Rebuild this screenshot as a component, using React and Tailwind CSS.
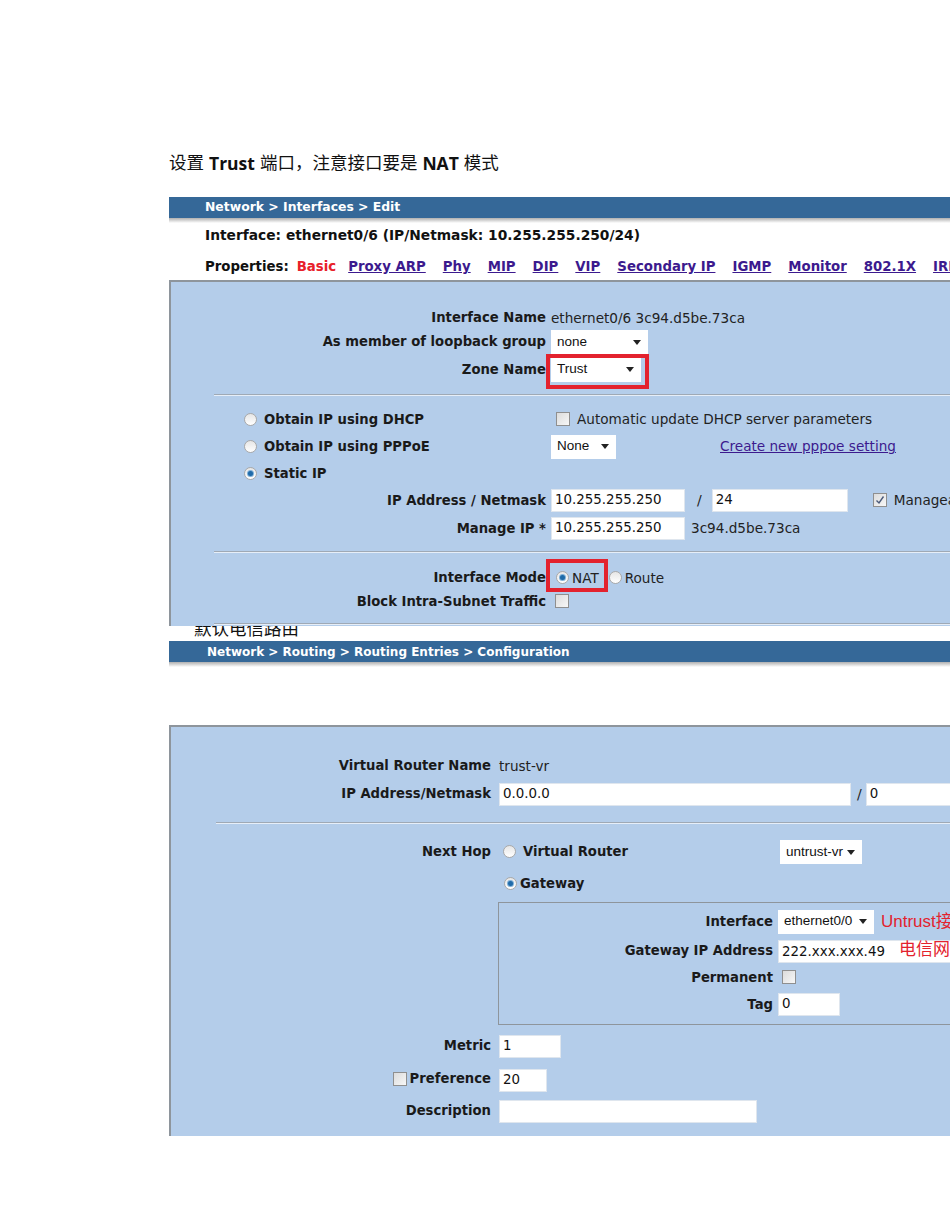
import React from 'react';

const V = { fontFamily: '"DejaVu Sans", Verdana, sans-serif' };
const A = { fontFamily: '"Liberation Sans", Arial, sans-serif' };
const CJK = { fontFamily: '"Liberation Sans", "Noto Sans CJK SC", sans-serif' };

const Radio = ({ checked }) => (
  <span className="inline-flex h-[13px] w-[13px] shrink-0 items-center justify-center rounded-full border border-[#a9a9a9] bg-gradient-to-b from-[#e6e6e6] to-[#ffffff]">
    {checked && <span className="h-[5px] w-[5px] rounded-full bg-[#1f6aa8] ring-1 ring-[#7fb0d8]" />}
  </span>
);

const Checkbox = ({ checked }) => (
  <span className="inline-flex h-[14px] w-[14px] shrink-0 items-center justify-center border border-[#8f8f8f] bg-gradient-to-br from-[#dcdcdc] to-[#f7f7f7]">
    {checked && (
      <svg width="10" height="10" viewBox="0 0 10 10">
        <path d="M1.5 5.5 L4 8 L8.5 1.5" fill="none" stroke="#4a5a7a" strokeWidth="1.4" />
      </svg>
    )}
  </span>
);

const Select = ({ value, width }) => (
  <span
    className="inline-flex h-[24px] shrink-0 items-center justify-between bg-white pl-[6px] pr-[7px] text-[13.5px] text-[#111]"
    style={{ ...A, width }}
  >
    <span>{value}</span>
    <svg width="8" height="5" viewBox="0 0 8 5">
      <path d="M0 0 H8 L4 5 Z" fill="#222" />
    </svg>
  </span>
);

const Input = ({ value, width }) => (
  <span
    className="inline-flex h-[23px] shrink-0 items-center border border-[#dfe6ee] bg-white px-[3px] text-[13.4px] text-[#111]"
    style={{ ...V, width }}
  >
    {value}
  </span>
);

const Separator = ({ left }) => (
  <div className="border-t border-b border-t-[#9fa9b5] border-b-[#e6eef8]" style={{ marginLeft: left }} />
);

const Row = ({ label, labelWidth, h, gap = 5, children }) => (
  <div className="flex items-center" style={{ height: h }}>
    <div className="shrink-0 whitespace-nowrap text-right text-[13.2px] font-bold text-[#1a1a1a]" style={{ ...V, width: labelWidth }}>
      {label}
    </div>
    <div className="flex items-center" style={{ marginLeft: gap }}>{children}</div>
  </div>
);

const TitleBar = ({ children, size = 'text-[12.4px]' }) => (
  <div>
    <div className={`flex h-[21px] items-center bg-[#356898] pl-[36px] font-bold text-white ${size}`} style={V}>
      {children}
    </div>
    <div className="h-[5px] bg-gradient-to-b from-[#b0b0b0] to-white" />
  </div>
);

const links = ['Proxy ARP', 'Phy', 'MIP', 'DIP', 'VIP', 'Secondary IP', 'IGMP', 'Monitor', '802.1X', 'IRDP'];
const txt = 'text-[13.6px] text-[#222]';

export default function App() {
  return (
    <div className="h-[1230px] w-[950px] overflow-hidden bg-white">
      <div className="pl-[169px]">
        <div className="h-[151px]" />
        <div className="flex h-[24px] items-center whitespace-nowrap text-[17.5px] text-[#111]" style={CJK}>
          设置 <b className="mx-[5px]" style={{ fontFamily: '"Open Sans", sans-serif' }}>Trust</b> 端口，注意接口要是
          <b className="mx-[5px]" style={{ fontFamily: '"Open Sans", sans-serif' }}>NAT</b> 模式
        </div>
        <div className="h-[22px]" />

        {/* screenshot 1 */}
        <div className="w-[800px]">
          <TitleBar>Network &gt; Interfaces &gt; Edit</TitleBar>
          <div className="flex h-[23px] items-center whitespace-nowrap pl-[36px] pt-[2px] text-[13.8px] font-bold text-[#111]" style={V}>
            Interface: ethernet0/6 (IP/Netmask: 10.255.255.250/24)
          </div>
          <div className="flex h-[34px] items-center gap-[17px] whitespace-nowrap pl-[36px] pt-[8px] text-[13.3px] font-bold" style={V}>
            <span className="text-[#111]">Properties:</span>
            <span className="-ml-[9px] text-[#e8202a]">Basic</span>
            {links.map((l, i) => (
              <span key={l} className={`text-[#3c1a8e] underline ${i === 0 ? '-ml-[5px]' : ''}`}>
                {l}
              </span>
            ))}
          </div>
          <div className="border-t-2 border-l-2 border-[#8e959c] bg-[#b4cdea] pb-[1px]">
            <div className="h-[24px]" />
            <Row label="Interface Name" labelWidth={375} h={24}>
              <span className={txt} style={V}>ethernet0/6 3c94.d5be.73ca</span>
            </Row>
            <Row label="As member of loopback group" labelWidth={375} h={24}>
              <Select value="none" width={97} />
            </Row>
            <Row label="Zone Name" labelWidth={375} h={31}>
              <span className="relative flex">
                <Select value="Trust" width={90} />
                <span className="absolute -left-[5px] -top-[4px] h-[35px] w-[103px] border-[4px] border-[#e3222e]" />
              </span>
            </Row>
            <div className="h-[9px]" />
            <Separator left={43} />
            <div className="h-[10px]" />
            {[
              ['Obtain IP using DHCP', false],
              ['Obtain IP using PPPoE', false],
              ['Static IP', true],
            ].map(([t, c], i) => (
              <div key={t} className="flex h-[27px] items-center">
                <div className="flex w-[380px] items-center gap-[7px] whitespace-nowrap pl-[73px] text-[13.2px] font-bold text-[#1a1a1a]" style={V}>
                  <Radio checked={c} />
                  {t}
                </div>
                {i === 0 && (
                  <div className={`flex items-center gap-[7px] whitespace-nowrap pl-[5px] ${txt}`} style={V}>
                    <Checkbox />
                    Automatic update DHCP server parameters
                  </div>
                )}
                {i === 1 && (
                  <div className="flex items-center">
                    <Select value="None" width={65} />
                    <span className="ml-[104px] whitespace-nowrap text-[13.6px] text-[#3c1a8e] underline" style={V}>
                      Create new pppoe setting
                    </span>
                  </div>
                )}
              </div>
            ))}
            <Row label="IP Address / Netmask" labelWidth={375} h={27}>
              <Input value="10.255.255.250" width={134} />
              <span className="ml-[12px] mr-[10px] text-[14px] text-[#222]" style={V}>/</span>
              <Input value="24" width={136} />
              <span className={`ml-[25px] flex items-center gap-[7px] whitespace-nowrap ${txt}`} style={V}>
                <Checkbox checked />
                Manageable
              </span>
            </Row>
            <Row label="Manage IP *" labelWidth={375} h={29}>
              <Input value="10.255.255.250" width={134} />
              <span className={`ml-[6px] ${txt}`} style={V}>3c94.d5be.73ca</span>
            </Row>
            <div className="h-[8px]" />
            <Separator left={43} />
            <div className="h-[12px]" />
            <Row label="Interface Mode" labelWidth={375} h={26}>
              <span className={`relative flex items-center gap-[3px] pl-[5px] ${txt}`} style={V}>
                <Radio checked />
                NAT
                <span className="absolute -left-[5px] -top-[9px] h-[33px] w-[62px] border-[4px] border-[#e3222e]" />
              </span>
              <span className={`ml-[10px] flex items-center gap-[3px] ${txt}`} style={V}>
                <Radio />
                Route
              </span>
            </Row>
            <Row label="Block Intra-Subnet Traffic" labelWidth={375} h={22}>
              <span className="ml-[4px]"><Checkbox /></span>
            </Row>
            <div className="h-[10px]" />
            <Separator left={43} />
          </div>
        </div>

        <div className="h-[15px] overflow-hidden pl-[25px]">
          <div className="-mt-[10px] text-[17.5px] text-[#111]" style={CJK}>默认电信路由</div>
        </div>

        {/* screenshot 2 */}
        <div className="w-[800px]">
          <TitleBar size="text-[12px]">
            <span className="pl-[2px]">Network &gt; Routing &gt; Routing Entries &gt; Configuration</span>
          </TitleBar>
          <div className="h-[58px]" />
          <div className="border-t-2 border-l-2 border-[#8e959c] bg-[#b4cdea]">
            <div className="h-[26px]" />
            <Row label="Virtual Router Name" labelWidth={320} h={26} gap={8}>
              <span className={txt} style={V}>trust-vr</span>
            </Row>
            <Row label="IP Address/Netmask" labelWidth={320} h={30} gap={8}>
              <Input value="0.0.0.0" width={352} />
              <span className="ml-[6px] mr-[4px] text-[14px] text-[#222]" style={V}>/</span>
              <Input value="0" width={120} />
            </Row>
            <div className="h-[13px]" />
            <Separator left={45} />
            <div className="h-[12px]" />
            <Row label="Next Hop" labelWidth={320} h={32} gap={8}>
              <span className="ml-[4px] flex w-[277px] items-center gap-[7px] whitespace-nowrap text-[13.2px] font-bold text-[#1a1a1a]" style={V}>
                <Radio />
                Virtual Router
              </span>
              <Select value="untrust-vr" width={82} />
            </Row>
            <Row label="" labelWidth={320} h={31} gap={8}>
              <span className="ml-[5px] flex items-center gap-[3px] text-[13.2px] font-bold text-[#1a1a1a]" style={V}>
                <Radio checked />
                Gateway
              </span>
            </Row>
            <div className="ml-[327px] mt-[3px] border border-[#8e959c] border-r-0 pb-[6px] pt-[4px]">
              <Row label="Interface" labelWidth={274} h={29}>
                <Select value="ethernet0/0" width={96} />
                <span className="ml-[7px] whitespace-nowrap text-[17px] text-[#e3222e]" style={CJK}>Untrust接口</span>
              </Row>
              <Row label="Gateway IP Address" labelWidth={274} h={29}>
                <span className="relative">
                  <Input value="222.xxx.xxx.49" width={200} />
                  <span className="absolute left-[121px] top-[-1px] whitespace-nowrap text-[17px] text-[#e3222e]" style={CJK}>
                    电信网关
                  </span>
                </span>
              </Row>
              <Row label="Permanent" labelWidth={274} h={26}>
                <span className="ml-[4px]"><Checkbox /></span>
              </Row>
              <Row label="Tag" labelWidth={274} h={27}>
                <Input value="0" width={62} />
              </Row>
            </div>
            <div className="h-[6px]" />
            <Row label="Metric" labelWidth={320} h={30} gap={8}>
              <Input value="1" width={62} />
            </Row>
            <div className="h-[4px]" />
            <Row
              label={
                <span className="inline-flex items-center gap-[3px]">
                  <Checkbox />
                  Preference
                </span>
              }
              labelWidth={320}
              h={30}
              gap={8}
            >
              <Input value="20" width={48} />
            </Row>
            <div className="h-[1px]" />
            <Row label="Description" labelWidth={320} h={30} gap={8}>
              <Input value="" width={258} />
            </Row>
            <div className="h-[10px]" />
          </div>
        </div>
      </div>
    </div>
  );
}
